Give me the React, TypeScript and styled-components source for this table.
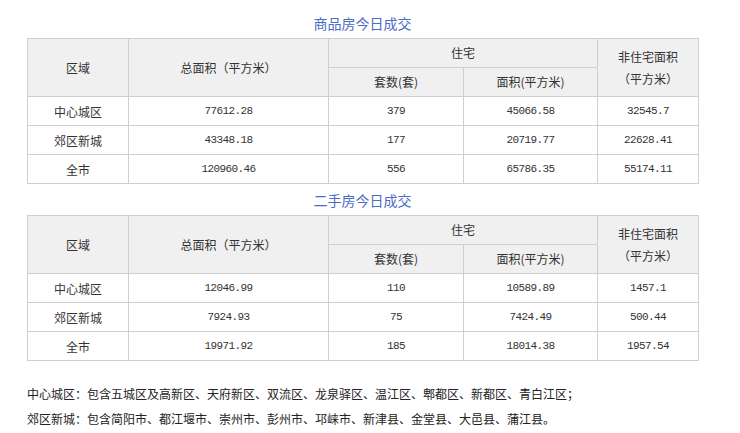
import * as React from 'react'
import styled, { createGlobalStyle } from 'styled-components'

const Global = createGlobalStyle`
  body {
    margin: 0;
    background: #fff;
    color: #333;
    font-family: "Noto Sans CJK SC", "Liberation Sans", sans-serif;
    font-size: 12px;
  }
`

const Page = styled.div`
  width: 671px;
  padding: 7px 0 0 27px;
`

const Title = styled.h3`
  margin: 6px 0 5px;
  text-align: center;
  font-size: 14px;
  line-height: 20px;
  font-weight: normal;
  color: #4a6cc4;
`

const Grid = styled.table`
  width: 671px;
  border-collapse: collapse;
  table-layout: fixed;
  border: 1px solid #cfcfcf;
`

const Th = styled.th`
  height: 28px;
  padding: 0;
  border: 1px solid #cfcfcf;
  background: #f0f0f0;
  font-weight: normal;
  font-size: 12px;
  line-height: 22px;
  color: #333;
  text-align: center;
`

const Td = styled.td<{ $num?: boolean }>`
  height: 28px;
  padding: 0;
  border: 1px solid #cfcfcf;
  text-align: center;
  color: #333;
  font-size: ${p => (p.$num ? '11px' : '12px')};
  font-family: ${p => (p.$num ? '"Liberation Mono", monospace' : 'inherit')};
  letter-spacing: ${p => (p.$num ? '-0.6px' : '0')};
`

const Notes = styled.div`
  margin-top: 20px;
  line-height: 25px;
  font-size: 12px;
  color: #222;
`

type Row = [string, string, string, string, string]

const newHouse: Row[] = [
  ['中心城区', '77612.28', '379', '45066.58', '32545.7'],
  ['郊区新城', '43348.18', '177', '20719.77', '22628.41'],
  ['全市', '120960.46', '556', '65786.35', '55174.11'],
]

const secondHand: Row[] = [
  ['中心城区', '12046.99', '110', '10589.89', '1457.1'],
  ['郊区新城', '7924.93', '75', '7424.49', '500.44'],
  ['全市', '19971.92', '185', '18014.38', '1957.54'],
]

const DealTable = ({ title, rows }: { title: string; rows: Row[] }) => (
  <>
    <Title>{title}</Title>
    <Grid>
      <colgroup>
        <col style={{ width: 101 }} />
        <col style={{ width: 200 }} />
        <col style={{ width: 135 }} />
        <col style={{ width: 134 }} />
        <col style={{ width: 101 }} />
      </colgroup>
      <thead>
        <tr>
          <Th rowSpan={2}>区域</Th>
          <Th rowSpan={2}>总面积（平方米）</Th>
          <Th colSpan={2}>住宅</Th>
          <Th rowSpan={2}>非住宅面积<br />（平方米）</Th>
        </tr>
        <tr>
          <Th>套数(套)</Th>
          <Th>面积(平方米)</Th>
        </tr>
      </thead>
      <tbody>
        {rows.map(r => (
          <tr key={r[0]}>
            <Td>{r[0]}</Td>
            <Td $num>{r[1]}</Td>
            <Td $num>{r[2]}</Td>
            <Td $num>{r[3]}</Td>
            <Td $num>{r[4]}</Td>
          </tr>
        ))}
      </tbody>
    </Grid>
  </>
)

export default function App() {
  return (
    <Page>
      <Global />
      <DealTable title="商品房今日成交" rows={newHouse} />
      <DealTable title="二手房今日成交" rows={secondHand} />
      <Notes>
        <div>中心城区：包含五城区及高新区、天府新区、双流区、龙泉驿区、温江区、郫都区、新都区、青白江区；</div>
        <div>郊区新城：包含简阳市、都江堰市、崇州市、彭州市、邛崃市、新津县、金堂县、大邑县、蒲江县。</div>
      </Notes>
    </Page>
  )
}
